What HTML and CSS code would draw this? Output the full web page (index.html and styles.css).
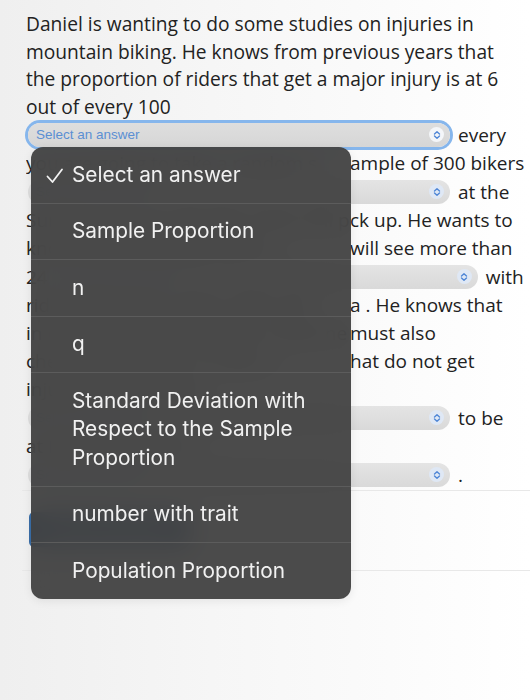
FILE: index.html
```html
<!DOCTYPE html>
<html>
<head>
<meta charset="utf-8">
<link rel="stylesheet" href="styles.css">
</head>
<body>
<div class="page">
  <p class="intro">Daniel is wanting to do some studies on injuries in mountain biking. He knows from previous years that the proportion of riders that get a major injury is at 6 out of every 100</p>
  <div class="qa">
    <div class="row sel-row">
      <div class="select focused"><span class="sel-text">Select an answer</span><span class="chev"><svg viewBox="0 0 12 12" width="12" height="12"><path d="M3.5 5 L6 2.8 L8.5 5 M3.5 7 L6 9.2 L8.5 7" fill="none" stroke="#4f86d6" stroke-width="1.4" stroke-linecap="round" stroke-linejoin="round"/></svg></span></div>
      <span class="after">every</span>
    </div>
    <div class="row"><span class="lead">you are going to take a random s</span>ample of 300 bikers</div>
    <div class="row sel-row">
      <div class="select"><span class="sel-text">Select an answer</span><span class="chev"><svg viewBox="0 0 12 12" width="12" height="12"><path d="M3.5 5 L6 2.8 L8.5 5 M3.5 7 L6 9.2 L8.5 7" fill="none" stroke="#4f86d6" stroke-width="1.4" stroke-linecap="round" stroke-linejoin="round"/></svg></span></div>
      <span class="after">at the</span>
    </div>
    <div class="row"><span class="lead">Sunday races to see how many will pi</span>ck up. He wants to</div>
    <div class="row"><span class="lead">know the probability that he </span>will see more than</div>
    <div class="row sel-row">
      <span class="pre">24</span>
      <div class="select"><span class="sel-text">Select an answer</span><span class="chev"><svg viewBox="0 0 12 12" width="12" height="12"><path d="M3.5 5 L6 2.8 L8.5 5 M3.5 7 L6 9.2 L8.5 7" fill="none" stroke="#4f86d6" stroke-width="1.4" stroke-linecap="round" stroke-linejoin="round"/></svg></span></div>
      <span class="after">with</span>
    </div>
    <div class="row"><span class="lead">riders being the mean of the dat</span>a . He knows that</div>
    <div class="row"><span class="lead">in order to use the normal model he </span>must also</div>
    <div class="row"><span class="lead">check the number of riders t</span>hat do not get</div>
    <div class="row"><span class="lead">injured, which is the</span></div>
    <div class="row sel-row">
      <div class="select"><span class="sel-text">Select an answer</span><span class="chev"><svg viewBox="0 0 12 12" width="12" height="12"><path d="M3.5 5 L6 2.8 L8.5 5 M3.5 7 L6 9.2 L8.5 7" fill="none" stroke="#4f86d6" stroke-width="1.4" stroke-linecap="round" stroke-linejoin="round"/></svg></span></div>
      <span class="after">to be</span>
    </div>
    <div class="row"><span class="lead">at least 10, and it is</span></div>
    <div class="row sel-row">
      <div class="select"><span class="sel-text">Select an answer</span><span class="chev"><svg viewBox="0 0 12 12" width="12" height="12"><path d="M3.5 5 L6 2.8 L8.5 5 M3.5 7 L6 9.2 L8.5 7" fill="none" stroke="#4f86d6" stroke-width="1.4" stroke-linecap="round" stroke-linejoin="round"/></svg></span></div>
      <span class="after dot">.</span>
    </div>
  </div>
  <hr class="rule">
  <div class="actions"><button class="submit">Submit Question</button></div>
  <hr class="rule">
</div>

<div class="menu">
  <div class="item checked"><svg class="check" viewBox="0 0 20 20" width="20" height="20"><path d="M2.5 10.5 L7.5 16 L17 3.5" fill="none" stroke="#f2f2f2" stroke-width="1.8" stroke-linecap="round" stroke-linejoin="round"/></svg>Select an answer</div>
  <div class="item">Sample Proportion</div>
  <div class="item">n</div>
  <div class="item">q</div>
  <div class="item">Standard Deviation with Respect to the Sample Proportion</div>
  <div class="item">number with trait</div>
  <div class="item">Population Proportion</div>
</div>
</body>
</html>
```

FILE: styles.css
```css
html, body {
  margin: 0;
  padding: 0;
}
body {
  width: 530px;
  min-height: 700px;
  background: linear-gradient(to right, #efefef 0%, #f6f6f6 40%, #ffffff 100%);
  font-family: "Open Sans", "Liberation Sans", sans-serif;
  color: #222;
  position: relative;
  overflow: hidden;
}
.page {
  padding: 10px 0 0 26px;
}
.intro {
  margin: 0;
  width: 490px;
  font-size: 19.2px;
  line-height: 27.5px;
}
.qa {
  font-size: 19px;
}
.row {
  height: 28px;
  line-height: 28px;
  white-space: nowrap;
  display: flex;
  align-items: center;
}
.sel-row {
  height: 29px;
  gap: 8px;
}
.lead {
  display: inline-block;
  width: 324px;
  overflow: hidden;
  white-space: nowrap;
}
.pre {
  margin-right: -2px;
}
.select {
  width: 422px;
  height: 24px;
  margin-left: 2px;
  border-radius: 12px;
  background: linear-gradient(#e4e4e4, #d9d9d9);
  display: flex;
  align-items: center;
  justify-content: space-between;
  padding: 0 6px 0 8px;
  box-sizing: border-box;
  flex: none;
}
.select.focused {
  box-shadow: 0 0 0 3px #86b6ec;
  background: linear-gradient(#dedede, #d6d6d6);
}
.sel-text {
  font-family: "Liberation Sans", Arial, sans-serif;
  font-size: 13.5px;
  color: #5a8fd3;
}
.chev {
  width: 15px;
  height: 15px;
  border-radius: 50%;
  background: #dfe8f5;
  display: flex;
  align-items: center;
  justify-content: center;
}
.focused .chev {
  background: #f4f6f9;
}
.after {
  line-height: 28px;
}
.rule {
  border: 0;
  border-top: 1px solid #e8e8e8;
  margin: 0 0 0 -4px;
}
.qa + .rule {
  margin-top: 1px;
}
.actions {
  padding: 21px 0 23px 3px;
}
.submit {
  width: 160px;
  height: 35px;
  border: 0;
  border-radius: 5px;
  background: #3a6ea8;
  color: #fff;
  font-family: "Liberation Sans", Arial, sans-serif;
  font-size: 15px;
}
.menu {
  position: absolute;
  left: 31px;
  top: 147px;
  width: 320px;
  border-radius: 12px;
  background: rgba(64, 64, 64, 0.94);
  backdrop-filter: blur(12px);
  overflow: hidden;
  font-family: Inter, "Noto Sans", sans-serif;
  font-size: 20.8px;
  color: #f1f1f1;
  box-shadow: 0 2px 10px rgba(0,0,0,0.08);
}
.item {
  position: relative;
  padding: 13.5px 20px 13.5px 41px;
  line-height: 28.5px;
  border-top: 1px solid #5c5c5c;
}
.item.checked {
  border-top: 0;
}
.check {
  position: absolute;
  left: 14px;
  top: 19px;
}
```
